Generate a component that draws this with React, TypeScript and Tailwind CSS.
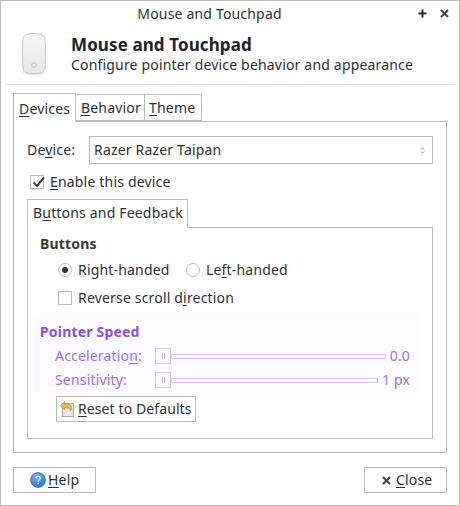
import React from "react";

const U = ({ children }: { children: React.ReactNode }) => (
  <span className="underline decoration-1 underline-offset-[2px] [text-decoration-skip-ink:none]">{children}</span>
);

const MouseIcon = () => (
  <svg width="30" height="46" viewBox="0 0 30 46" className="shrink-0">
    <defs>
      <linearGradient id="mb" x1="0" y1="0" x2="0" y2="1">
        <stop offset="0" stopColor="#f7f7f7" />
        <stop offset="0.5" stopColor="#efefef" />
        <stop offset="1" stopColor="#e6e6e6" />
      </linearGradient>
      <radialGradient id="ms" cx="0.5" cy="0.5" r="0.5">
        <stop offset="0" stopColor="#999" stopOpacity="0.5" />
        <stop offset="1" stopColor="#999" stopOpacity="0" />
      </radialGradient>
    </defs>
    <ellipse cx="15" cy="41" rx="14" ry="3" fill="url(#ms)" />
    <path d="M15 1.500c-7.500 0-10.500 1.500-11 6C3.200 14 3.200 30 4 36c.5 4 3 5.500 11 5.500S25.500 40 26 36c.8-6 .8-22 0-28.500-.5-4.500-3.500-6-11-6z" fill="url(#mb)" stroke="#c6c6c6" strokeWidth="1" />
    <circle cx="15" cy="33" r="2.300" fill="none" stroke="#b5b5b5" strokeWidth="1" />
  </svg>
);

const HelpIcon = () => (
  <svg width="16" height="16" viewBox="0 0 16 16" className="shrink-0">
    <defs>
      <radialGradient id="hb" cx="0.4" cy="0.3" r="0.8">
        <stop offset="0" stopColor="#7db4ec" />
        <stop offset="1" stopColor="#1f6cc4" />
      </radialGradient>
    </defs>
    <circle cx="8" cy="8" r="7.500" fill="url(#hb)" stroke="#2a6db5" strokeWidth="0.700" />
    <path d="M5.700 6.200c.2-1.400 1.100-2.100 2.400-2.100 1.400 0 2.300.8 2.300 1.900 0 1.700-2.200 1.700-2.200 3.500" fill="none" stroke="#e8f1fb" strokeWidth="1.300" />
    <rect x="7.500" y="10.800" width="1.400" height="1.500" fill="#e8f1fb" />
  </svg>
);

const ResetIcon = () => (
  <svg width="14" height="16" viewBox="0 0 14 16" className="shrink-0">
    <rect x="2.500" y="2.500" width="11" height="13" fill="#e6e6e6" stroke="#a8a8a8" />
    <path d="M0.500 4.500 L4.500 0.500 V3 H7.500c2.500 0 4 1.500 4 4 0 1.300-.6 2.200-1.300 2.800 .1-1.800-.9-3-2.700-3H4.500v2z" fill="#f0b64a" stroke="#b98420" strokeWidth="0.700" />
  </svg>
);

const CloseX = () => (
  <svg width="9" height="9" viewBox="0 0 9 9" className="shrink-0">
    <path d="M1 1 L8 8 M8 1 L1 8" stroke="#4a4a4a" strokeWidth="2.200" />
  </svg>
);

const Slider = ({ label, value, trackW, valueW }: { label: React.ReactNode; value: string; trackW: string; valueW: string }) => (
  <div className="flex items-center h-[24px] pl-[22px] text-[#a26ee6]">
    <span className="w-[100px] shrink-0 -mt-[2px]">{label}</span>
    <span className="w-[16px] h-[16px] border border-[#dcc4fb] flex items-center justify-center gap-[1px] shrink-0 bg-[#fcfbff]">
      <span className="w-[1px] h-[6px] bg-[#d4b8f6]" />
      <span className="w-[1px] h-[6px] bg-[#d4b8f6]" />
    </span>
    <span className={`h-[5px] border border-[#dcc4fb] bg-[#fcfbff] ${trackW}`} />
    <span className={`text-right whitespace-nowrap -mt-[2px] ${valueW}`}>{value}</span>
  </div>
);

export default function App() {
  return (
    <div
      className="w-[460px] h-[506px] box-border border border-[#bbbbbb] bg-white flex flex-col text-[14px] leading-[19px] tracking-[0.18px] text-[#2c3138] overflow-hidden"
      style={{ fontFamily: '"Noto Sans", sans-serif' }}
    >
      <div className="relative h-[26px] shrink-0 flex items-center justify-center pr-[41px] pb-[1px]">
        Mouse and Touchpad
        <svg width="9" height="9" viewBox="0 0 9 9" className="absolute left-[417px] top-[8px]">
          <path d="M4.500 0.500V8.500M0.500 4.500H8.500" stroke="#2c3138" strokeWidth="2" />
        </svg>
        <svg width="9" height="9" viewBox="0 0 9 9" className="absolute left-[439px] top-[8px]">
          <path d="M1 1L8 8M8 1L1 8" stroke="#4a4a4a" strokeWidth="2.200" />
        </svg>
      </div>

      <div className="h-[58px] mx-[4px] shrink-0 flex items-start border-b border-[#e0e0e0] pl-[14px] pt-[5px]">
        <MouseIcon />
        <div className="ml-[22px]">
          <div className="text-[17px] leading-[24px] pt-[1px] font-bold tracking-[0.1px] text-[#20242a]">Mouse and Touchpad</div>
          <div className="leading-[17px] -mt-[1px]">Configure pointer device behavior and appearance</div>
        </div>
      </div>

      <div className="flex mx-[12px] mt-[8px] h-[28px] shrink-0 items-end">
        <div className="w-[63px] h-[29px] -mb-[1px] z-10 bg-white border border-b-0 border-[#bbbbbb] flex items-center pl-[5px]">
          <span><U>D</U>evices</span>
        </div>
        <div className="w-[69px] h-[27px] border border-l-0 border-[#bbbbbb] flex items-center pl-[5px]">
          <span><U>B</U>ehavior</span>
        </div>
        <div className="w-[57px] h-[27px] border border-l-0 border-[#bbbbbb] flex items-center pl-[4px]">
          <span><U>T</U>heme</span>
        </div>
      </div>

      <div className="mx-[12px] h-[332px] shrink-0 border border-[#bbbbbb] px-[13px] pt-[14px]">
        <div className="flex items-center h-[28px]">
          <span className="w-[62px] -mt-[2px]">De<U>v</U>ice:</span>
          <div className="w-[344px] h-[28px] border border-[#bbbbbb] flex items-center pl-[4px] pr-[7px]">
            <span className="flex-1 -mt-[2px]">Razer Razer Taipan</span>
            <svg width="5" height="7" viewBox="0 0 5 7">
              <path d="M0.700 2.500L2.500 0.700L4.300 2.500M0.700 4.500L2.500 6.300L4.300 4.500" fill="none" stroke="#888" strokeWidth="0.900" />
            </svg>
          </div>
        </div>

        <div className="flex items-center h-[20px] mt-[8px] pl-[3px]">
          <span className="relative w-[14px] h-[14px] border border-[#bbbbbb] shrink-0">
            <svg width="16" height="14" viewBox="0 0 16 14" className="absolute left-[0px] -top-[1px]">
              <path d="M2.500 7.500L6 11L13 2.500" fill="none" stroke="#3a3f45" strokeWidth="2" />
            </svg>
          </span>
          <span className="ml-[6px] -mt-[2px]"><U>E</U>nable this device</span>
        </div>

        <div className="flex mt-[7px] h-[28px] items-end">
          <div className="w-[161px] h-[29px] -mb-[1px] z-10 bg-white border border-b-0 border-[#bbbbbb] flex items-center pl-[5px] pb-[3px]">
            <span>B<U>u</U>ttons and Feedback</span>
          </div>
        </div>

        <div className="w-[406px] h-[212px] border border-[#bbbbbb] pt-[7px]">
          <div className="pl-[12px] h-[18px] font-bold text-[#3a3a3a] leading-[18px]">Buttons</div>
          <div className="flex items-center h-[20px] mt-[7px] pl-[30px]">
            <span className="w-[14px] h-[14px] rounded-full border border-[#bbbbbb] flex items-center justify-center shrink-0">
              <span className="w-[6px] h-[6px] rounded-full bg-[#33383e]" />
            </span>
            <span className="ml-[6px] w-[108px] -mt-[2px]">Right-handed</span>
            <span className="w-[14px] h-[14px] rounded-full border border-[#bbbbbb] shrink-0" />
            <span className="ml-[6px] -mt-[2px]">Le<U>f</U>t-handed</span>
          </div>
          <div className="flex items-center h-[20px] mt-[8px] pl-[30px]">
            <span className="w-[14px] h-[14px] border border-[#bbbbbb] shrink-0" />
            <span className="ml-[6px] -mt-[2px]">Reverse scroll d<U>i</U>rection</span>
          </div>

          <div className="mt-[5px] ml-[5px] w-[387px] h-[80px] bg-[#fcfbff] pt-[10px]">
            <div className="pl-[7px] h-[18px] leading-[18px] font-bold text-[#8e4fdd]">Pointer Speed</div>
            <div className="mt-[3px]">
              <Slider label={<>Acceleratio<U>n</U>:</>} value="0.0" trackW="w-[215px]" valueW="w-[24px]" />
              <Slider label="Sensitivity:" value="1 px" trackW="w-[207px]" valueW="w-[32px]" />
            </div>
          </div>

          <div className="ml-[28px] mt-[3px] w-[140px] h-[26px] border border-[#bbbbbb] flex items-center pl-[3px]">
            <ResetIcon />
            <span className="ml-[4px] -mt-[2px] tracking-[0.1px]"><U>R</U>eset to Defaults</span>
          </div>
        </div>
      </div>

      <div className="flex justify-between mx-[12px] mt-[14px]">
        <div className="w-[83px] h-[26px] border border-[#bbbbbb] flex items-center pl-[16px]">
          <HelpIcon />
          <span className="ml-[2px] -mt-[2px]"><U>H</U>elp</span>
        </div>
        <div className="w-[83px] h-[26px] border border-[#bbbbbb] flex items-center pl-[17px]">
          <CloseX />
          <span className="ml-[5px] -mt-[2px]"><U>C</U>lose</span>
        </div>
      </div>
    </div>
  );
}
